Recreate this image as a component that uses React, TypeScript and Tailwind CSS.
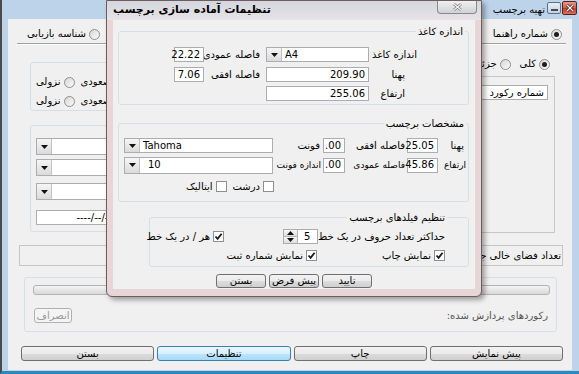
import React from 'react';

const btnBg = 'bg-[linear-gradient(#f2f2f2_0%,#ebebeb_50%,#dddddd_51%,#cfcfcf_100%)]';

const Radio = ({ checked = false }: { checked?: boolean }) => (
  <span className="flex h-[11px] w-[11px] shrink-0 items-center justify-center rounded-full border border-[#8e8f8f] bg-[linear-gradient(135deg,#d6d6d6,#fbfbfb)]">
    {checked && <span className="h-[5px] w-[5px] rounded-full bg-[#1c1c1c]" />}
  </span>
);

const RadioItem = ({ label, checked = false }: { label: string; checked?: boolean }) => (
  <span dir="rtl" className="flex items-center gap-[3px] whitespace-nowrap">
    <Radio checked={checked} />
    <span>{label}</span>
  </span>
);

const CheckItem = ({ label, checked = false }: { label: string; checked?: boolean }) => (
  <span dir="rtl" className="flex items-center gap-[3px] whitespace-nowrap">
    <span className="flex h-[11px] w-[11px] shrink-0 items-center justify-center border border-[#8e8f8f] bg-white">
      {checked && (
        <svg width="9" height="9" viewBox="0 0 9 9">
          <path d="M1.5 4.5 L3.6 6.8 L7.6 1.8" fill="none" stroke="#1a1a1a" strokeWidth="1.8" />
        </svg>
      )}
    </span>
    <span>{label}</span>
  </span>
);

const Field = ({ value = '', className = '' }: { value?: string; className?: string }) => (
  <div dir="ltr" className={`flex shrink-0 items-center justify-end border border-[#abadb3] bg-white px-[3px] ${className}`}>
    {value}
  </div>
);

const Arrow = ({ up = false }: { up?: boolean }) => (
  <svg width="7" height="4" viewBox="0 0 7 4">
    <path d={up ? 'M0 4 H7 L3.5 0 Z' : 'M0 0 H7 L3.5 4 Z'} fill="#111" />
  </svg>
);

const Combo = ({ value = '', className = '', pad = 'pl-[3px]' }: { value?: string; className?: string; pad?: string }) => (
  <div dir="ltr" className={`flex shrink-0 items-stretch border border-[#abadb3] bg-white ${className}`}>
    <span className="flex w-[15px] items-center justify-center border-r border-[#c3c3c3] bg-[linear-gradient(#f6f6f6,#dadada)]">
      <Arrow />
    </span>
    <span className={`flex items-center ${pad}`}>{value}</span>
  </div>
);

const WinButton = ({ label, className = '' }: { label: string; className?: string }) => (
  <div dir="rtl" className={`flex items-center justify-center rounded-[3px] border border-[#707070] ${btnBg} ${className}`}>
    {label}
  </div>
);

const Label = ({ text, className = '' }: { text: string; className?: string }) => (
  <span dir="rtl" className={`shrink-0 whitespace-nowrap ${className}`}>
    {text}
  </span>
);

export default function App() {
  return (
    <div className="relative h-[374px] w-[579px] overflow-hidden font-['DejaVu_Sans',sans-serif] text-[10px] leading-[12px] text-black">
      {/* main window */}
      <div className="flex h-full w-full flex-col border-b-[3px] border-l-2 border-b-[#2f88bd] border-l-[#4a4a4a] bg-[#bcd3ea]">
        <div className="flex h-[19px] shrink-0 items-start justify-end gap-[1px] pr-[2px]">
          <span dir="rtl" className="mr-[1px] mt-[4px]">تهیه برچسب</span>
          <span className="mt-[2px] flex h-[12px] w-[14px] items-end justify-center rounded-[2px] border border-[#5d6f86] bg-[linear-gradient(#e8eef6,#c3d2e4)] pb-[2px]">
            <span className="h-[2px] w-[7px] border border-[#4a4a4a] bg-white" />
          </span>
          <span className="mt-[1px] flex h-[14px] w-[15px] items-center justify-center rounded-[2px] border border-[#5a1f18] bg-[linear-gradient(#e79a8c,#d4584b_50%,#c13a2e_51%,#d8705d)]">
            <svg width="8" height="8" viewBox="0 0 8 8">
              <path d="M1 1 L7 7 M7 1 L1 7" stroke="#3a0d08" strokeWidth="2.6" />
              <path d="M1 1 L7 7 M7 1 L1 7" stroke="#ffffff" strokeWidth="1.4" />
            </svg>
          </span>
        </div>

        <div className="ml-[6px] mr-[7px] flex h-[351px] flex-col bg-[#f0f0f0]">
          <div className="mt-[9px] flex h-[12px] items-center justify-between pl-[19px] pr-[10px]">
            <RadioItem label="شناسه بازیابی" />
            <RadioItem label="شماره راهنما" checked />
          </div>
          <div className="ml-[9px] mr-[6px] mt-[3px] h-[2px] border-b border-t border-b-white border-t-[#a0a0a0]" />

          <div className="flex justify-between">
            <div className="ml-[22px] w-[220px]">
              <div className="mt-[17px] h-[49px] rounded-[3px] border border-[#d5dfe5]">
                <div dir="rtl" className="mt-[13px] flex h-[12px] items-center justify-end gap-[6px] pl-[5px]">
                  <RadioItem label="صعودی" />
                  <RadioItem label="نزولی" />
                </div>
                <div dir="rtl" className="mt-[7px] flex h-[12px] items-center justify-end gap-[6px] pl-[5px]">
                  <RadioItem label="صعودی" />
                  <RadioItem label="نزولی" />
                </div>
              </div>
              <div className="mt-[14px] h-[107px] rounded-[3px] border border-[#d5dfe5] pl-[5px]">
                <Combo className="mt-[12px] h-[17px] w-[180px]" />
                <Combo className="mt-[4px] h-[17px] w-[180px]" />
                <Combo className="mt-[7px] h-[17px] w-[180px]" />
                <Field value="----/--/--" className="mt-[10px] h-[15px] w-[80px]" />
              </div>
            </div>

            <div className="mr-[17px] w-[255px]">
              <div dir="rtl" className="mt-[13px] flex h-[12px] items-center gap-[9px] pr-[5px]">
                <RadioItem label="کلی" checked />
                <RadioItem label="جزئی" />
              </div>
              <div className="mt-[6px] h-[157px] border border-[#c6c6c6]">
                <div dir="rtl" className="ml-auto mr-[6px] mt-[8px] flex h-[15px] w-[200px] items-center border border-[#abadb3] bg-white pr-[3px]">
                  شماره رکورد
                </div>
              </div>
            </div>
          </div>

          <div dir="rtl" className="ml-[11px] mr-[9px] mt-[12px] flex h-[21px] items-center border border-[#c6c6c6] pr-[1px]">
            <Label text="تعداد فضای خالی جهت" />
          </div>

          <div className="ml-[16px] mr-[15px] mt-[11px] h-[55px] rounded-[3px] border border-[#d5dfe5]">
            <div className="ml-[8px] mr-[6px] mt-[7px] h-[10px] rounded-[3px] border border-[#b2b2b2] bg-[linear-gradient(#f4f4f4,#d9d9d9)]" />
            <div className="mt-[13px] flex items-center justify-between pl-[9px] pr-[8px]">
              <div className="flex h-[15px] w-[38px] items-center justify-center rounded-[3px] border border-[#adb2b5] bg-[#f4f4f4] text-[#9a9a9a]">
                انصراف
              </div>
              <Label text="رکوردهای پردازش شده:" className="text-[#555555]" />
            </div>
          </div>

          <div dir="rtl" className="ml-[13px] mr-[9px] mt-[14px] flex h-[15px] gap-[3px]">
            <WinButton label="پیش نمایش" className="flex-1" />
            <WinButton label="چاپ" className="flex-1" />
            <div className="flex flex-1 items-center justify-center rounded-[3px] border border-[#3c7fb1] bg-[linear-gradient(#eaf6fd_0%,#d9f0fc_50%,#bee6fd_51%,#a7d9f5_100%)]">
              تنظیمات
            </div>
            <WinButton label="بستن" className="flex-1" />
          </div>
        </div>
      </div>

      {/* dialog window */}
      <div className="absolute left-[106px] top-0 flex h-[297px] w-[376px] flex-col rounded-b-[6px] border border-[#6f5c5c] bg-[#e8d6d6] shadow-[3px_3px_5px_rgba(0,0,0,0.35)]">
        <div className="flex h-[19px] shrink-0 items-start justify-between bg-[linear-gradient(#d3d7de,#e7e3e6)] pl-[6px] pr-[4px]">
          <span dir="rtl" className="mt-[3px] text-[11px] font-bold">تنظیمات آماده سازی برچسب</span>
          <span className="flex h-[13px] w-[40px] items-center justify-center rounded-b-[4px] border border-t-0 border-[#8a8a8a] bg-[linear-gradient(#f0f0f0,#cfd2d6)]">
            <svg width="9" height="8" viewBox="0 0 9 8">
              <path d="M1 1 L8 7 M8 1 L1 7" stroke="#7a7a7a" strokeWidth="2.6" />
              <path d="M1 1 L8 7 M8 1 L1 7" stroke="#f4f4f4" strokeWidth="1.2" />
            </svg>
          </span>
        </div>

        <div dir="rtl" className="mx-[6px] flex h-[269px] flex-col bg-[#f0f0f0]">
          {/* paper size */}
          <div className="ml-[5px] mr-[6px] mt-[11px] h-[74px] rounded-[3px] border border-[#d5dfe5]">
            <div className="-mt-[7px] mr-[3px] w-fit bg-[#f0f0f0] px-[2px] leading-[13px]">اندازه کاغذ</div>
            <div className="mt-[9px] flex h-[15px] items-center">
              <Label text="اندازه کاغذ" className="w-[99px] pl-[3px] text-left" />
              <Combo value="A4" className="h-[15px] w-[103px]" />
              <Label text="فاصله عمودی" className="w-[62px] pr-[6px]" />
              <Field value="22.22" className="h-[15px] w-[30px]" />
            </div>
            <div className="mt-[5px] flex h-[15px] items-center">
              <Label text="پهنا" className="w-[99px] pr-[63px]" />
              <Field value="209.90" className="h-[15px] w-[103px]" />
              <Label text="فاصله افقی" className="w-[62px] pr-[6px]" />
              <Field value="7.06" className="h-[15px] w-[30px]" />
            </div>
            <div className="mt-[4px] flex h-[15px] items-center">
              <Label text="ارتفاع" className="w-[99px] pr-[63px]" />
              <Field value="255.06" className="h-[15px] w-[103px]" />
            </div>
          </div>

          {/* label specs */}
          <div className="ml-[5px] mr-[6px] mt-[18px] h-[79px] rounded-[3px] border border-[#d5dfe5]">
            <div className="-mt-[7px] mr-[2px] w-fit bg-[#f0f0f0] px-[2px] leading-[13px]">مشخصات برچسب</div>
            <div className="mt-[8px] flex h-[15px] items-center">
              <Label text="پهنا" className="w-[30px] pr-[4px]" />
              <Field value="25.05" className="h-[15px] w-[31px]" />
              <Label text="فاصله افقی" className="w-[62px] pr-[2px]" />
              <Field value=".00" className="h-[15px] w-[22px]" />
              <Label text="فونت" className="w-[50px] pr-[3px]" />
              <Combo value="Tahoma" className="h-[15px] w-[149px]" />
            </div>
            <div className="mt-[4px] flex h-[16px] items-center">
              <Label text="ارتفاع" className="w-[30px] pr-[2px] text-[9px]" />
              <Field value="45.86" className="h-[15px] w-[31px]" />
              <Label text="فاصله عمودی" className="w-[62px] pr-[2px] text-[9px]" />
              <Field value=".00" className="h-[15px] w-[22px]" />
              <Label text="اندازه فونت" className="w-[50px] pr-[2px] text-[9px]" />
              <Combo value="10" className="h-[17px] w-[149px]" pad="pl-[8px]" />
            </div>
            <div className="mt-[7px] flex h-[13px] items-center gap-[6px] pr-[194px]">
              <CheckItem label="درشت" />
              <CheckItem label="ایتالیک" />
            </div>
          </div>

          {/* label fields */}
          <div className="ml-[36px] mr-[6px] mt-[15px] h-[50px] rounded-[3px] border border-[#d5dfe5]">
            <div className="-mt-[7px] mr-[21px] w-fit bg-[#f0f0f0] px-[2px] leading-[13px]">تنظیم فیلدهای برچسب</div>
            <div className="mt-[5px] flex h-[15px] items-center">
              <Label text="حداکثر تعداد حروف در یک خط" className="w-[150px] pr-[23px]" />
              <div dir="ltr" className="flex h-[15px] w-[35px] shrink-0 border border-[#abadb3] bg-white">
                <div className="flex w-[14px] flex-col border-r border-[#b5b5b5]">
                  <span className="flex flex-1 items-center justify-center border-b border-[#b5b5b5] bg-[linear-gradient(#f7f7f7,#dedede)]">
                    <Arrow up />
                  </span>
                  <span className="flex flex-1 items-center justify-center bg-[linear-gradient(#f7f7f7,#dedede)]">
                    <Arrow />
                  </span>
                </div>
                <span className="flex flex-1 items-center pl-[6px]">5</span>
              </div>
              <div className="w-[59px] shrink-0" />
              <CheckItem label="هر / در یک خط" checked />
            </div>
            <div className="mt-[5px] flex h-[13px] items-center pr-[23px]">
              <div className="w-[128px] shrink-0">
                <CheckItem label="نمایش چاپ" checked />
              </div>
              <CheckItem label="نمایش شماره ثبت" checked />
            </div>
          </div>

          <div className="mt-[7px] flex h-[14px] justify-center gap-[3px]">
            <WinButton label="تایید" className="w-[50px]" />
            <WinButton label="پیش فرض" className="w-[50px]" />
            <WinButton label="بستن" className="w-[50px]" />
          </div>
        </div>
      </div>
    </div>
  );
}
